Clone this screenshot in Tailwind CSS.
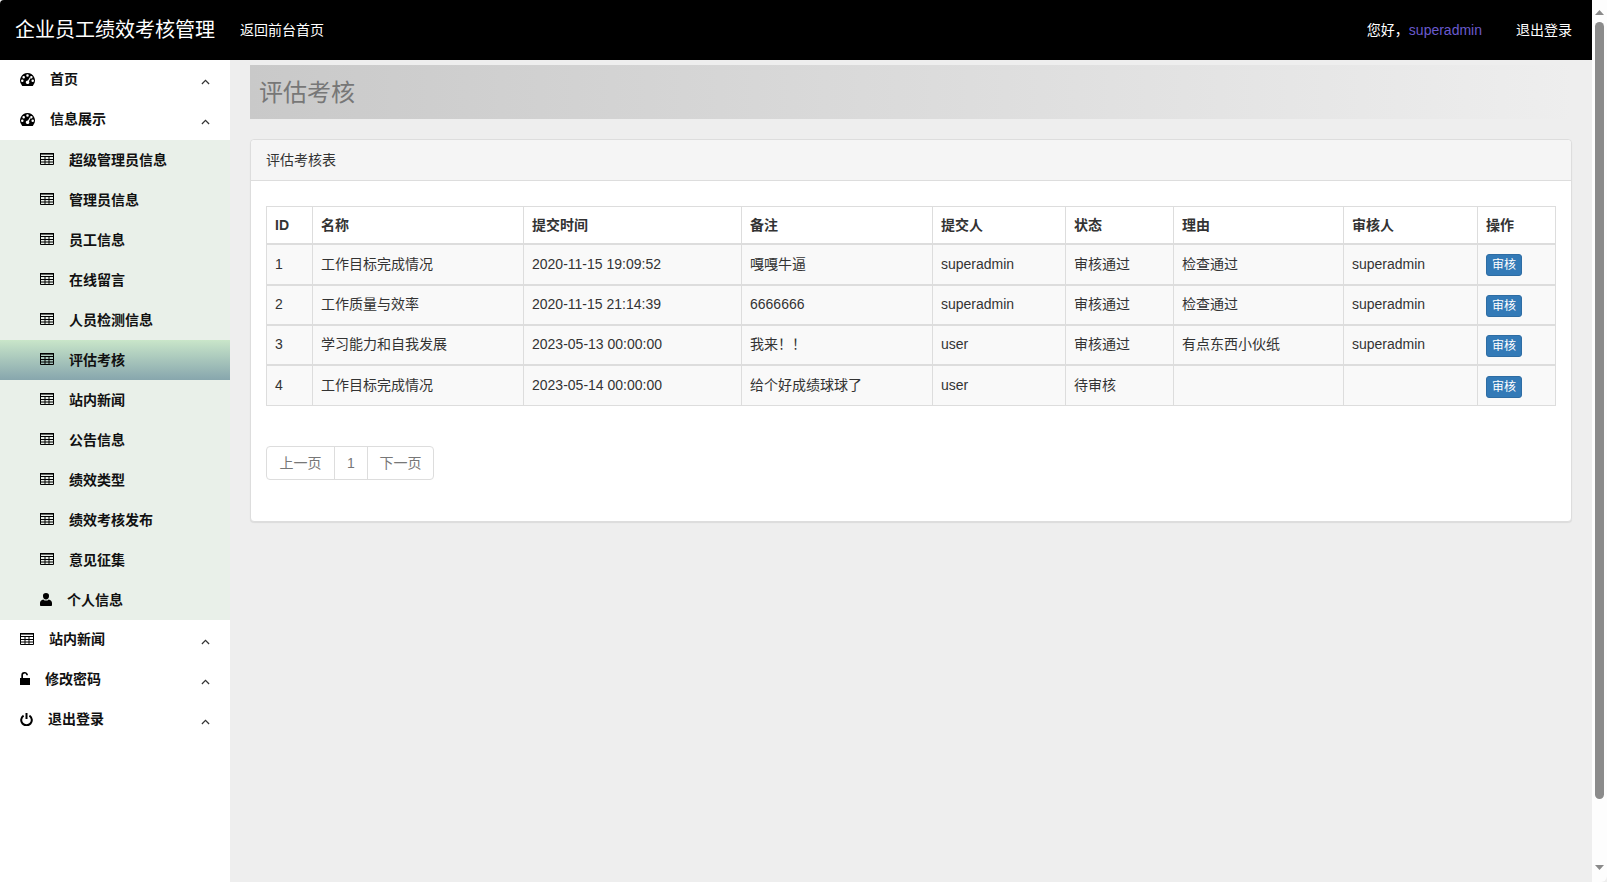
<!DOCTYPE html>
<html lang="zh">
<head>
    <meta charset="UTF-8">
    <title>企业员工绩效考核管理</title>
    <script src="https://cdn.jsdelivr.net/npm/@tailwindcss/browser@4"></script>
</head>
<body class="bg-[#eeeeee] text-[#333] text-[14px] font-['Liberation_Sans','Noto_Sans_CJK_SC',sans-serif] overflow-hidden">
    <!-- icon defs -->
    <svg class="hidden">
        <symbol id="i-dash" viewBox="0 0 16 14">
            <path fill="#000" fill-rule="evenodd" d="M8 0a8 8 0 0 1 6.6 12.5l-.9 1.5H2.3l-.9-1.5A8 8 0 0 1 8 0ZM8 1.4a1.3 1.3 0 1 0 0 2.7 1.3 1.3 0 0 0 0-2.7ZM3.9 3.2a1.3 1.3 0 1 0 0 2.7 1.3 1.3 0 0 0 0-2.7ZM12.1 3.2a1.3 1.3 0 1 0 0 2.7 1.3 1.3 0 0 0 0-2.7ZM2.4 7a1.3 1.3 0 1 0 0 2.7 1.3 1.3 0 0 0 0-2.7ZM13.6 7a1.3 1.3 0 1 0 0 2.7 1.3 1.3 0 0 0 0-2.7ZM10.6 4.6 8.5 8.2a1.9 1.9 0 1 0 1 .6l2-3.6Z"/>
        </symbol>
        <symbol id="i-table" viewBox="0 0 14 12">
            <path fill="none" stroke="#000" d="M.5.5h13v11H.5zM.5 3.5h13M.5 6.5h13M.5 9h13M5 3v9M9 3v9"/>
            <path fill="#000" d="M0 0h14v1.6H0z"/>
        </symbol>
        <symbol id="i-up" viewBox="0 0 10 6">
            <path fill="none" stroke="#333" stroke-width="1.4" d="M1 5.2 5 1.2l4 4"/>
        </symbol>
    </svg>

    <div class="flex h-[882px] w-[1607px]">
        <div class="flex-1 min-w-0 flex flex-col">
            <header class="h-[60px] bg-black text-white flex items-center shrink-0 rounded-tl-[4px]">
                <a class="ml-[15px] text-[20px]">企业员工绩效考核管理</a>
                <a class="ml-[25px]">返回前台首页</a>
                <div class="ml-auto flex items-center mr-[20px]">
                    <span>您好，<span class="text-[#6a5acd]">superadmin</span></span>
                    <a class="ml-[34px]">退出登录</a>
                </div>
            </header>

            <div class="flex flex-1 min-h-0">
                <aside class="w-[230px] shrink-0 bg-white font-bold text-[#111]">
                    <div class="h-10 flex items-center pl-[20px] pr-[20px]">
                        <svg class="w-[15px] h-[13px] -mt-[1px]"><use href="#i-dash"/></svg>
                        <span class="ml-[15px] -mt-[1px]">首页</span>
                        <svg class="ml-auto mt-[4px] w-[9px] h-[6px]"><use href="#i-up"/></svg>
                    </div>
                    <div class="h-10 flex items-center pl-[20px] pr-[20px]">
                        <svg class="w-[15px] h-[13px] -mt-[1px]"><use href="#i-dash"/></svg>
                        <span class="ml-[15px] -mt-[1px]">信息展示</span>
                        <svg class="ml-auto mt-[4px] w-[9px] h-[6px]"><use href="#i-up"/></svg>
                    </div>
                    <div class="bg-[#e9f0e9]">
                        <div class="h-10 flex items-center pl-[40px]"><svg class="w-[14px] h-[12px] -mt-[2px]"><use href="#i-table"/></svg><span class="ml-[15px]">超级管理员信息</span></div>
                        <div class="h-10 flex items-center pl-[40px]"><svg class="w-[14px] h-[12px] -mt-[2px]"><use href="#i-table"/></svg><span class="ml-[15px]">管理员信息</span></div>
                        <div class="h-10 flex items-center pl-[40px]"><svg class="w-[14px] h-[12px] -mt-[2px]"><use href="#i-table"/></svg><span class="ml-[15px]">员工信息</span></div>
                        <div class="h-10 flex items-center pl-[40px]"><svg class="w-[14px] h-[12px] -mt-[2px]"><use href="#i-table"/></svg><span class="ml-[15px]">在线留言</span></div>
                        <div class="h-10 flex items-center pl-[40px]"><svg class="w-[14px] h-[12px] -mt-[2px]"><use href="#i-table"/></svg><span class="ml-[15px]">人员检测信息</span></div>
                        <div class="h-10 flex items-center pl-[40px] bg-gradient-to-b from-[#c9e6c9] to-[#87a6ad]"><svg class="w-[14px] h-[12px] -mt-[2px]"><use href="#i-table"/></svg><span class="ml-[15px]">评估考核</span></div>
                        <div class="h-10 flex items-center pl-[40px]"><svg class="w-[14px] h-[12px] -mt-[2px]"><use href="#i-table"/></svg><span class="ml-[15px]">站内新闻</span></div>
                        <div class="h-10 flex items-center pl-[40px]"><svg class="w-[14px] h-[12px] -mt-[2px]"><use href="#i-table"/></svg><span class="ml-[15px]">公告信息</span></div>
                        <div class="h-10 flex items-center pl-[40px]"><svg class="w-[14px] h-[12px] -mt-[2px]"><use href="#i-table"/></svg><span class="ml-[15px]">绩效类型</span></div>
                        <div class="h-10 flex items-center pl-[40px]"><svg class="w-[14px] h-[12px] -mt-[2px]"><use href="#i-table"/></svg><span class="ml-[15px]">绩效考核发布</span></div>
                        <div class="h-10 flex items-center pl-[40px]"><svg class="w-[14px] h-[12px] -mt-[2px]"><use href="#i-table"/></svg><span class="ml-[15px]">意见征集</span></div>
                        <div class="h-10 flex items-center pl-[40px]">
                            <svg class="w-[12px] h-[13px] -mt-[1px]" viewBox="0 0 12 13"><path fill="#000" d="M6 0a3 3 0 0 1 3 3.2C9 5 7.8 6.6 6 6.6S3 5 3 3.2A3 3 0 0 1 6 0ZM3.3 6.4C4 7.2 5 7.6 6 7.6s2-.4 2.7-1.2C10.6 6.8 12 8 12 10v2.2c0 .5-.4.8-.8.8H.8c-.4 0-.8-.3-.8-.8V10c0-2 1.4-3.2 3.3-3.6Z"/></svg>
                            <span class="ml-[15px]">个人信息</span>
                        </div>
                    </div>
                    <div class="h-10 flex items-center pl-[20px] pr-[20px]">
                        <svg class="w-[14px] h-[12px] -mt-[2px]"><use href="#i-table"/></svg>
                        <span class="ml-[15px] -mt-[1px]">站内新闻</span>
                        <svg class="ml-auto mt-[4px] w-[9px] h-[6px]"><use href="#i-up"/></svg>
                    </div>
                    <div class="h-10 flex items-center pl-[20px] pr-[20px]">
                        <svg class="w-[10px] h-[13px] -mt-[3px]" viewBox="0 0 10 13"><path fill="#000" d="M0 6h1.3V3.4A3.3 3.3 0 0 1 4.7 0C6.5 0 8 1.4 8 3.2H6.3c0-.9-.7-1.6-1.6-1.6S3 2.4 3 3.4V6h7v7H0Z"/></svg>
                        <span class="ml-[15px] -mt-[1px]">修改密码</span>
                        <svg class="ml-auto mt-[4px] w-[9px] h-[6px]"><use href="#i-up"/></svg>
                    </div>
                    <div class="h-10 flex items-center pl-[20px] pr-[20px]">
                        <svg class="w-[13px] h-[13px] -mt-[2px]" viewBox="0 0 13 13"><path fill="none" stroke="#000" stroke-width="2" d="M3.6 2.6a5.3 5.3 0 1 0 5.8 0M6.5 0v6"/></svg>
                        <span class="ml-[15px] -mt-[1px]">退出登录</span>
                        <svg class="ml-auto mt-[4px] w-[9px] h-[6px]"><use href="#i-up"/></svg>
                    </div>
                </aside>

                <main class="flex-1 min-w-0 pl-[20px] pr-[20px] pt-[5px]">
                    <div class="h-[54px] flex items-center pl-[9px] pt-[2px] bg-gradient-to-r from-[#c9c9c9] to-[#eeeeee] text-[24px] text-[#777]">评估考核</div>
                    <section class="mt-[20px] w-[1322px] h-[383px] bg-white border border-[#ddd] rounded-[4px] shadow-[0_1px_1px_rgba(0,0,0,0.08)]">
                        <div class="h-[41px] flex items-center pl-[15px] bg-[#f5f5f5] border-b border-[#ddd] rounded-t-[4px]">评估考核表</div>
                        <div class="pt-[25px] px-[15px]">
                            <table class="w-[1289px] table-fixed border-collapse border border-[#ddd]">
                                <colgroup>
                                    <col class="w-[46px]"><col class="w-[211px]"><col class="w-[218px]"><col class="w-[191px]"><col class="w-[133px]"><col class="w-[108px]"><col class="w-[170px]"><col class="w-[134px]"><col class="w-[78px]">
                                </colgroup>
                                <thead>
                                    <tr class="h-[37px] text-left">
                                        <th class="px-2 pt-[2px] border border-[#ddd] border-b-2">ID</th>
                                        <th class="px-2 pt-[2px] border border-[#ddd] border-b-2">名称</th>
                                        <th class="px-2 pt-[2px] border border-[#ddd] border-b-2">提交时间</th>
                                        <th class="px-2 pt-[2px] border border-[#ddd] border-b-2">备注</th>
                                        <th class="px-2 pt-[2px] border border-[#ddd] border-b-2">提交人</th>
                                        <th class="px-2 pt-[2px] border border-[#ddd] border-b-2">状态</th>
                                        <th class="px-2 pt-[2px] border border-[#ddd] border-b-2">理由</th>
                                        <th class="px-2 pt-[2px] border border-[#ddd] border-b-2">审核人</th>
                                        <th class="px-2 pt-[2px] border border-[#ddd] border-b-2">操作</th>
                                    </tr>
                                </thead>
                                <tbody class="bg-[#f9f9f9]">
                                    <tr class="h-[41px]">
                                        <td class="px-2 border border-[#ddd] border-b-2">1</td>
                                        <td class="px-2 border border-[#ddd] border-b-2">工作目标完成情况</td>
                                        <td class="px-2 border border-[#ddd] border-b-2">2020-11-15 19:09:52</td>
                                        <td class="px-2 border border-[#ddd] border-b-2">嘎嘎牛逼</td>
                                        <td class="px-2 border border-[#ddd] border-b-2">superadmin</td>
                                        <td class="px-2 border border-[#ddd] border-b-2">审核通过</td>
                                        <td class="px-2 border border-[#ddd] border-b-2">检查通过</td>
                                        <td class="px-2 border border-[#ddd] border-b-2">superadmin</td>
                                        <td class="px-2 border border-[#ddd] border-b-2"><a class="mt-[2px] w-[36px] h-[22px] flex items-center justify-center bg-[#337ab7] border border-[#2e6da4] rounded-[3px] text-white text-[12px]">审核</a></td>
                                    </tr>
                                    <tr class="h-[40px]">
                                        <td class="px-2 border border-[#ddd] border-b-2">2</td>
                                        <td class="px-2 border border-[#ddd] border-b-2">工作质量与效率</td>
                                        <td class="px-2 border border-[#ddd] border-b-2">2020-11-15 21:14:39</td>
                                        <td class="px-2 border border-[#ddd] border-b-2">6666666</td>
                                        <td class="px-2 border border-[#ddd] border-b-2">superadmin</td>
                                        <td class="px-2 border border-[#ddd] border-b-2">审核通过</td>
                                        <td class="px-2 border border-[#ddd] border-b-2">检查通过</td>
                                        <td class="px-2 border border-[#ddd] border-b-2">superadmin</td>
                                        <td class="px-2 border border-[#ddd] border-b-2"><a class="mt-[3px] w-[36px] h-[22px] flex items-center justify-center bg-[#337ab7] border border-[#2e6da4] rounded-[3px] text-white text-[12px]">审核</a></td>
                                    </tr>
                                    <tr class="h-[40px]">
                                        <td class="px-2 border border-[#ddd] border-b-2">3</td>
                                        <td class="px-2 border border-[#ddd] border-b-2">学习能力和自我发展</td>
                                        <td class="px-2 border border-[#ddd] border-b-2">2023-05-13 00:00:00</td>
                                        <td class="px-2 border border-[#ddd] border-b-2">我来！！</td>
                                        <td class="px-2 border border-[#ddd] border-b-2">user</td>
                                        <td class="px-2 border border-[#ddd] border-b-2">审核通过</td>
                                        <td class="px-2 border border-[#ddd] border-b-2">有点东西小伙纸</td>
                                        <td class="px-2 border border-[#ddd] border-b-2">superadmin</td>
                                        <td class="px-2 border border-[#ddd] border-b-2"><a class="mt-[3px] w-[36px] h-[22px] flex items-center justify-center bg-[#337ab7] border border-[#2e6da4] rounded-[3px] text-white text-[12px]">审核</a></td>
                                    </tr>
                                    <tr class="h-[41px]">
                                        <td class="px-2 border border-[#ddd]">4</td>
                                        <td class="px-2 border border-[#ddd]">工作目标完成情况</td>
                                        <td class="px-2 border border-[#ddd]">2023-05-14 00:00:00</td>
                                        <td class="px-2 border border-[#ddd]">给个好成绩球球了</td>
                                        <td class="px-2 border border-[#ddd]">user</td>
                                        <td class="px-2 border border-[#ddd]">待审核</td>
                                        <td class="px-2 border border-[#ddd]"></td>
                                        <td class="px-2 border border-[#ddd]"></td>
                                        <td class="px-2 border border-[#ddd]"><a class="mt-[3px] w-[36px] h-[22px] flex items-center justify-center bg-[#337ab7] border border-[#2e6da4] rounded-[3px] text-white text-[12px]">审核</a></td>
                                    </tr>
                                </tbody>
                            </table>
                            <div class="mt-[40px] flex h-[34px] w-max text-[#777] bg-white border border-[#ddd] rounded-[4px]">
                                <a class="w-[67px] flex items-center justify-center">上一页</a>
                                <a class="w-[33px] flex items-center justify-center border-l border-[#ddd]">1</a>
                                <a class="w-[66px] flex items-center justify-center border-l border-[#ddd]">下一页</a>
                            </div>
                        </div>
                    </section>
                </main>
            </div>
        </div>

        <!-- scrollbar -->
        <div class="w-[15px] shrink-0 bg-[#fdfdfd] flex flex-col items-center rounded-br-[6px]">
            <svg class="mt-[10px] w-[9px] h-[5px]" viewBox="0 0 9 5"><path fill="#8a8a8a" d="M4.5 0 9 5H0Z"/></svg>
            <div class="mt-[7px] w-[9px] h-[777px] rounded-full bg-[#8b8b8b]"></div>
            <svg class="mt-[66px] w-[9px] h-[5px]" viewBox="0 0 9 5"><path fill="#8a8a8a" d="M4.5 5 9 0H0Z"/></svg>
        </div>
    </div>
</body>
</html>
